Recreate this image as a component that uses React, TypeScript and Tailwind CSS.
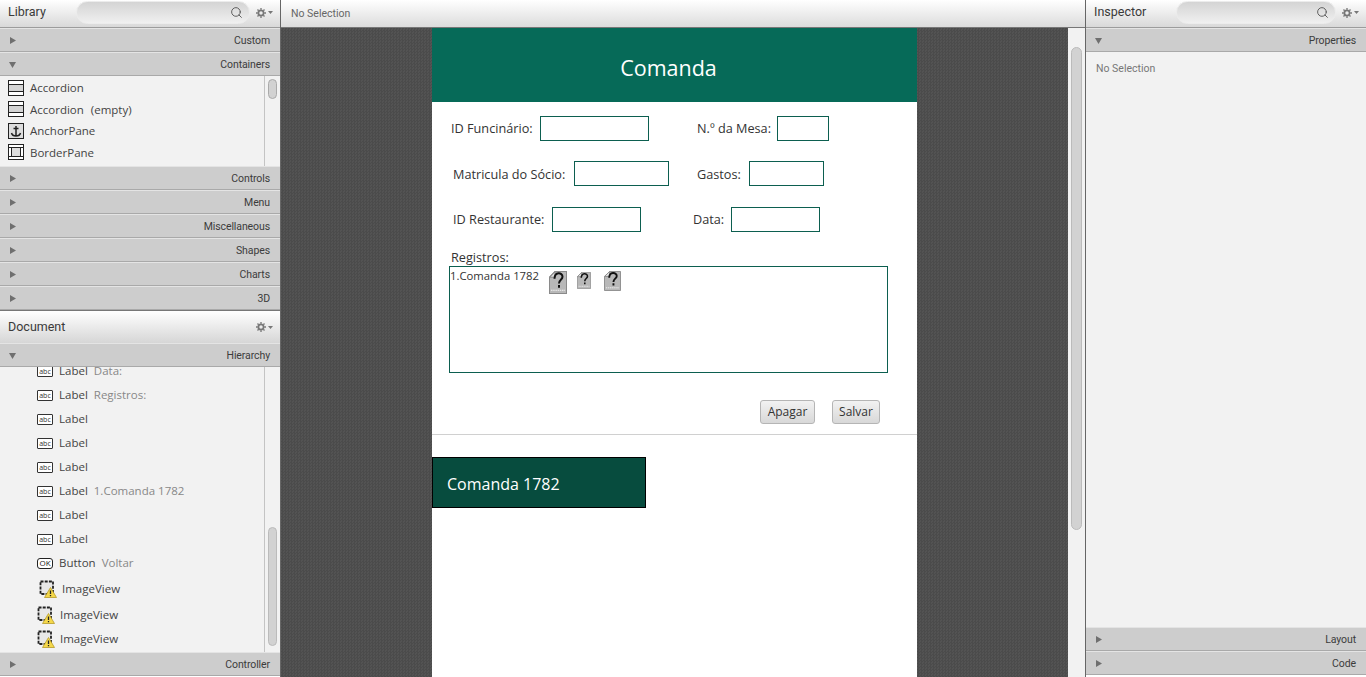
import { Search } from "lucide-react";

const font = { fontFamily: '"Open Sans", "Liberation Sans", sans-serif' };
const narrow = { fontFamily: 'Roboto, "Open Sans", sans-serif' };

function Caret({ open }: { open?: boolean }) {
  return (
    <svg width="7" height="7" viewBox="0 0 7 7" className="shrink-0">
      {open ? <path d="M0 1h7L3.5 7z" fill="#6f6f6f" /> : <path d="M1 0l6 3.5L1 7z" fill="#6f6f6f" />}
    </svg>
  );
}

function TitleRow({ title, open }: { title: string; open?: boolean }) {
  return (
    <div className="flex h-6 shrink-0 items-center justify-between border-t border-t-[#e4e4e4] border-b border-b-[#a9a9a9] bg-[#cdcdcd] pl-[9px] pr-[10px] text-[10.5px] tracking-[-0.1px] text-[#3c3c3c]" style={narrow}>
      <Caret open={open} />
      <span className="pt-[2px]">{title}</span>
    </div>
  );
}

function Gear() {
  return (
    <span className="flex items-center gap-[2px]">
      <svg width="10" height="10" viewBox="0 0 12 12">
        <circle cx="6" cy="6" r="3.2" fill="none" stroke="#777" strokeWidth="2.2" />
        <path d="M6 0v2M6 10v2M0 6h2M10 6h2M1.8 1.8l1.4 1.4M8.8 8.8l1.4 1.4M1.8 10.2l1.4-1.4M8.8 3.2l1.4-1.4" stroke="#777" strokeWidth="1.6" />
      </svg>
      <svg width="5" height="3" viewBox="0 0 5 3"><path d="M0 0h5L2.5 3z" fill="#777" /></svg>
    </span>
  );
}

function SearchHeader({ title, fieldW, titleW }: { title: string; fieldW: string; titleW: string }) {
  return (
    <div className="flex h-[28px] shrink-0 items-center border-b border-[#9c9c9c] bg-gradient-to-b from-[#ffffff] to-[#d9d9d9] pl-2 pr-[7px]">
      <span className={`${titleW} -mt-[2px] text-[12.5px] text-[#3a3a3a]`} style={narrow}>{title}</span>
      <div className={`${fieldW} -mt-[2px] flex h-[23px] items-center justify-end rounded-full border border-[#ececec] bg-gradient-to-b from-[#d4d4d4] to-[#f0f0f0] pr-[6px]`}>
        <Search size={13} strokeWidth={1.8} className="text-[#5c5c5c]" />
      </div>
      <span className="ml-auto -mt-[2px]"><Gear /></span>
    </div>
  );
}

function TableIcon() {
  return (
    <svg width="16" height="16" viewBox="0 0 16 16" className="shrink-0">
      <rect x=".5" y=".5" width="15" height="15" fill="#d4d4d4" stroke="#222" />
      <rect x="1" y="1" width="14" height="3" fill="#fff" />
      <rect x="1" y="12" width="14" height="3" fill="#fff" />
      <path d="M0 4.500h16M0 11.500h16" stroke="#222" />
    </svg>
  );
}

function AnchorIcon() {
  return (
    <svg width="16" height="16" viewBox="0 0 16 16" className="shrink-0">
      <rect x=".5" y=".5" width="15" height="15" fill="#ddd" stroke="#222" />
      <path d="M8 3v10M5.500 5.500h5M3.500 10c.5 2 2.500 3 4.500 3s4-1 4.500-3" fill="none" stroke="#222" strokeWidth="1.500" />
    </svg>
  );
}

function BorderIcon() {
  return (
    <svg width="16" height="16" viewBox="0 0 16 16" className="shrink-0">
      <rect x=".5" y=".5" width="15" height="15" fill="#fff" stroke="#222" />
      <rect x="4" y="4" width="8" height="8" fill="#ddd" />
      <path d="M0 3.500h16M0 12.500h16M3.500 3.500v9M12.500 3.500v9" stroke="#222" />
    </svg>
  );
}

function AbcIcon() {
  return (
    <span className="flex h-[11px] w-4 shrink-0 items-center justify-center rounded-[1px] border border-[#333] bg-white text-[7px] leading-none text-[#333]">abc</span>
  );
}

function OkIcon() {
  return (
    <span className="flex h-[11px] w-4 shrink-0 items-center justify-center rounded-[3px] border border-[#222] bg-white text-[8px] leading-none text-[#222]">OK</span>
  );
}

function ImageViewIcon() {
  return (
    <svg width="18" height="18" viewBox="0 0 18 18" className="shrink-0">
      <rect x="1.500" y="1.500" width="12.500" height="12.500" fill="#e8e8e8" stroke="#222" strokeWidth="1.800" strokeDasharray="3 1.200" />
      <path d="M11.500 7.500L17.500 17.500H5.500z" fill="#f5d84a" stroke="#b59a2a" strokeWidth=".8" />
      <path d="M11.500 10.500v3.500M11.500 15v1.300" stroke="#222" strokeWidth="1.300" />
    </svg>
  );
}

function LibraryRow({ icon, text, sub }: { icon: React.ReactNode; text: string; sub?: string }) {
  return (
    <div className="flex h-[21.5px] items-center gap-[6px] pl-2 text-[11.5px] text-[#444]">
      {icon}
      <span>{text}</span>
      {sub && <span className="ml-[1px]">{sub}</span>}
    </div>
  );
}

const hierarchy = [
  { sub: "Data:" },
  { sub: "Registros:" },
  {},
  {},
  {},
  { sub: "1.Comanda 1782" },
  {},
  {},
];

function LeftPanel() {
  return (
    <aside className="flex w-[281px] shrink-0 flex-col border-r border-[#666] bg-[#f2f2f2]">
      <SearchHeader title="Library" titleW="w-[68px]" fieldW="w-[174px]" />
      <TitleRow title="Custom" />
      <TitleRow title="Containers" open />
      <div className="flex h-[90px] shrink-0 overflow-hidden">
        <div className="flex-1 pt-[1px]">
          <LibraryRow icon={<TableIcon />} text="Accordion" />
          <LibraryRow icon={<TableIcon />} text="Accordion" sub="(empty)" />
          <LibraryRow icon={<AnchorIcon />} text="AnchorPane" />
          <LibraryRow icon={<BorderIcon />} text="BorderPane" />
        </div>
        <div className="w-[16px] border-l border-[#c4c4c4] px-[3px] pt-[3px]">
          <div className="h-5 rounded-full border border-[#aaa] bg-[#d2d2d2]" />
        </div>
      </div>
      <TitleRow title="Controls" />
      <TitleRow title="Menu" />
      <TitleRow title="Miscellaneous" />
      <TitleRow title="Shapes" />
      <TitleRow title="Charts" />
      <TitleRow title="3D" />
      <div className="flex h-[33px] shrink-0 items-center justify-between border-t border-[#777] bg-gradient-to-b from-[#ffffff] to-[#d6d6d6] pl-2 pr-[7px]">
        <span className="text-[12.5px] text-[#3a3a3a]" style={narrow}>Document</span>
        <Gear />
      </div>
      <TitleRow title="Hierarchy" open />
      <div className="flex h-[285px] shrink-0 overflow-hidden">
        <div className="flex-1 pl-[37px] text-[11.5px] text-[#444]">
          <div className="-mt-[8px]">
            {hierarchy.map((row, i) => (
              <div key={i} className="flex h-6 items-center gap-[6px]">
                <AbcIcon />
                <span>Label</span>
                {row.sub && <span className="text-[#888]">{row.sub}</span>}
              </div>
            ))}
            <div className="flex h-6 items-center gap-[6px]">
              <OkIcon />
              <span>Button</span>
              <span className="text-[#888]">Voltar</span>
            </div>
            <div className="flex h-[28px] items-center gap-[5px] pl-[2px]">
              <ImageViewIcon />
              <span>ImageView</span>
            </div>
            <div className="flex h-6 items-center gap-[5px]">
              <ImageViewIcon />
              <span>ImageView</span>
            </div>
            <div className="flex h-6 items-center gap-[5px]">
              <ImageViewIcon />
              <span>ImageView</span>
            </div>
          </div>
        </div>
        <div className="w-[16px] border-l border-[#c4c4c4] px-[3px] pt-[160px]">
          <div className="h-[119px] rounded-full border border-[#bbb] bg-[#d2d2d2]" />
        </div>
      </div>
      <TitleRow title="Controller" />
      <div className="flex-1 bg-white" />
    </aside>
  );
}

function Field({ label, labelW, inputW, ml, labelPt = "" }: { label: string; labelW: string; inputW: string; ml: string; labelPt?: string }) {
  return (
    <div className={`flex items-center ${ml}`}>
      <span className={`${labelW} ${labelPt} text-[12.7px] text-[#333]`}>{label}</span>
      <div className={`${inputW} h-[25px] border border-[#0c5f50] bg-white`} />
    </div>
  );
}

function Unknown({ w, h }: { w: number; h: number }) {
  return (
    <svg width={w} height={h} viewBox="0 0 18 22" preserveAspectRatio="none" className="shrink-0">
      <path d="M6 .5h11.500v21H.5V6z" fill="#b8b8b8" stroke="#8a8a8a" />
      <path d="M.5 6H6V.5z" fill="#e0e0e0" stroke="#8a8a8a" />
      <path d="M5.500 7.500c0-7 8-6.500 8-2 0 3-3.500 3-3.500 6.500M10 13.500v2.500" fill="none" stroke="#111" strokeWidth="2" />
      <path d="M2 18.500h14" stroke="#f2f2f2" strokeWidth="1" strokeDasharray="1.500 .7" />
    </svg>
  );
}

function Form() {
  return (
    <div className="mx-auto flex h-full w-[485px] flex-col bg-white">
      <div className="flex h-[74px] shrink-0 items-center justify-center bg-[#066a58] pr-3 pt-[6px] text-[21.5px] text-white">Comanda</div>
      <div className="mt-[14px] flex">
        <Field label="ID Funcinário:" labelW="w-[89px]" inputW="w-[109px]" ml="ml-[19px]" />
        <Field label="N.º da Mesa:" labelW="w-[80px]" inputW="w-[52px]" ml="ml-[48px]" />
      </div>
      <div className="mt-[20px] flex">
        <Field label="Matricula do Sócio:" labelW="w-[121px]" inputW="w-[95px]" ml="ml-[21px]" labelPt="pt-[3px]" />
        <Field label="Gastos:" labelW="w-[52px]" inputW="w-[75px]" ml="ml-[28px]" labelPt="pt-[3px]" />
      </div>
      <div className="mt-[21px] flex">
        <Field label="ID Restaurante:" labelW="w-[99px]" inputW="w-[89px]" ml="ml-[21px]" labelPt="pt-[1px]" />
        <Field label="Data:" labelW="w-[38px]" inputW="w-[89px]" ml="ml-[52px]" labelPt="pt-[1px]" />
      </div>
      <span className="ml-[19px] mt-[17px] h-[17px] text-[12.7px] leading-[17px] text-[#333]">Registros:</span>
      <div className="ml-[17px] h-[107px] w-[439px] border border-[#0c5f50] pt-[1px]">
        <div className="flex items-start">
          <span className="w-[99px] text-[11.3px] leading-[16px] text-[#333]">1.Comanda 1782</span>
          <span className="mt-[3px]"><Unknown w={18} h={23} /></span>
          <span className="ml-[10px] mt-[4px]"><Unknown w={14} h={17} /></span>
          <span className="ml-[13px] mt-[3px]"><Unknown w={17} h={20} /></span>
        </div>
      </div>
      <div className="mt-[27px] flex justify-end gap-[17px] pr-[37px]">
        <button className="h-6 w-[55px] rounded-[3px] border border-[#b5b5b5] bg-gradient-to-b from-[#f2f2f2] to-[#d8d8d8] text-[12px] text-[#333]">Apagar</button>
        <button className="h-6 w-[48px] rounded-[3px] border border-[#b5b5b5] bg-gradient-to-b from-[#f2f2f2] to-[#d8d8d8] text-[12px] text-[#333]">Salvar</button>
      </div>
      <div className="mt-[10px] h-px bg-[#d0d0d0]" />
      <div className="mt-[22px] flex h-[51px] w-[214px] items-center border border-black bg-[#074c3e] pl-[14px] pt-[3px] text-[16px] text-white">Comanda 1782</div>
    </div>
  );
}

function Center() {
  return (
    <main className="flex min-w-0 flex-1 flex-col">
      <div className="flex h-[28px] shrink-0 items-center border-b border-[#777] bg-gradient-to-b from-[#ffffff] to-[#dcdcdc] pl-[10px] text-[10.5px] text-[#666]" style={narrow}>No Selection</div>
      <div className="flex min-h-0 flex-1">
        <div className="min-w-0 flex-1 bg-[#4f4f4f] bg-[repeating-conic-gradient(#4b4b4b_0_25%,#535353_0_50%)] bg-[length:3px_3px]">
          <Form />
        </div>
        <div className="w-[17px] shrink-0 bg-[#f2f2f2] px-[3px] pt-[19px]">
          <div className="h-[483px] rounded-full border border-[#bbb] bg-[#d2d2d2]" />
        </div>
      </div>
    </main>
  );
}

function RightPanel() {
  return (
    <aside className="flex w-[281px] shrink-0 flex-col border-l border-[#666] bg-[#f2f2f2]">
      <SearchHeader title="Inspector" titleW="w-[82px]" fieldW="w-[160px]" />
      <TitleRow title="Properties" open />
      <div className="flex-1 pl-[10px] pt-[9px] text-[10.5px] text-[#777]" style={narrow}>No Selection</div>
      <TitleRow title="Layout" />
      <TitleRow title="Code" />
      <div className="h-[2px] shrink-0 bg-white" />
    </aside>
  );
}

export default function App() {
  return (
    <div className="flex h-[677px] w-[1366px] overflow-hidden" style={font}>
      <LeftPanel />
      <Center />
      <RightPanel />
    </div>
  );
}
